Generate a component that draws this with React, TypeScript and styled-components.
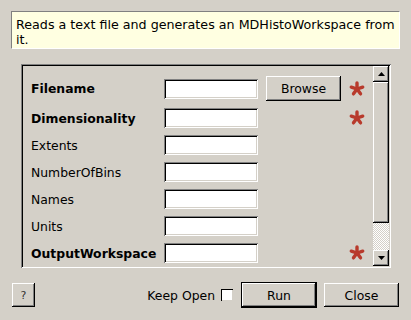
import { FC } from "react";
import styled, { createGlobalStyle, css } from "styled-components";

const GlobalStyle = createGlobalStyle`
  html, body {
    margin: 0;
    padding: 0;
    background-color: #d4d0c8;
  }

  * {
    box-sizing: border-box;
  }
`;

const raised = css`
  background-color: #d4d0c8;
  border: none;
  box-shadow: inset -1px -1px #000, inset 1px 1px #fff, inset -2px -2px #808080,
    inset 2px 2px #d4d0c8;
`;

const sunken = css`
  box-shadow: inset 1px 1px #808080, inset -1px -1px #fff, inset 2px 2px #000,
    inset -2px -2px #d4d0c8;
`;

const Dialog = styled.div`
  width: 411px;
  height: 320px;
  padding: 11px;
  display: flex;
  flex-direction: column;
  background-color: #d4d0c8;
  font-family: "DejaVu Sans", "Liberation Sans", sans-serif;
  font-size: 12.4px;
  color: #000;
`;

const Description = styled.p`
  margin: 0;
  height: 38px;
  padding: 5px 1px 0 4px;
  font-size: 12.7px;
  line-height: 15px;
  background-color: #ffffe1;
  border-top: 1px solid #808080;
  border-left: 1px solid #808080;
  border-bottom: 1px solid #fff;
  border-right: 1px solid #fff;
`;

const Panel = styled.div`
  margin: 15px 9px 0 10px;
  height: 204px;
  padding: 2px;
  display: flex;
  ${sunken};
`;

const Content = styled.div`
  flex: 1;
  padding: 10px 0 0 8px;
  display: flex;
  flex-direction: column;
  gap: 7px;
  overflow: hidden;
`;

const Row = styled.div`
  display: grid;
  grid-template-columns: 125px 94px 75px 16px;
  column-gap: 8px;
  align-items: center;
`;

const Label = styled.span<{ $required?: boolean }>`
  font-weight: ${(props) => (props.$required ? "bold" : "normal")};
  white-space: nowrap;
`;

const TextBox = styled.input`
  width: 94px;
  height: 20px;
  padding: 2px 4px;
  border: none;
  background-color: #fff;
  font: inherit;
  ${sunken};
`;

const Button = styled.button<{ $width: number; $height: number }>`
  width: ${(props) => props.$width}px;
  height: ${(props) => props.$height}px;
  padding: 0;
  font-family: inherit;
  font-size: 12.4px;
  color: #000;
  ${raised};
`;

const DefaultButton = styled(Button)`
  box-shadow: inset 0 0 0 1px #000, inset -2px -2px #000, inset 2px 2px #fff,
    inset -3px -3px #808080;
`;

const HelpButton = styled(Button)`
  font-size: 11px;
  color: #333;
`;

const ScrollBar = styled.div`
  width: 16px;
  display: flex;
  flex-direction: column;
`;

const ArrowButton = styled.div`
  height: 16px;
  display: flex;
  align-items: center;
  justify-content: center;
  ${raised};
`;

const Thumb = styled.div`
  height: 141px;
  ${raised};
`;

const Trough = styled.div`
  flex: 1;
  background: repeating-conic-gradient(#fff 0 25%, #d4d0c8 0 50%) 0 0 / 2px 2px;
`;

const Footer = styled.footer`
  margin-top: 14px;
  padding: 0 1px;
  display: flex;
  align-items: center;
`;

const Spacer = styled.div`
  flex: 1;
`;

const KeepOpen = styled.label`
  display: flex;
  align-items: center;
  gap: 6px;
  margin-right: 8px;
`;

const CheckBox = styled.span`
  width: 12px;
  height: 12px;
  background-color: #fff;
  box-shadow: inset 1px 1px #000, inset -1px -1px #d4d0c8;
`;

const CloseButton = styled(Button)`
  margin-left: 7px;
`;

const Arrow: FC<{ down?: boolean }> = ({ down }) => (
  <svg width="7" height="4" viewBox="0 0 7 4">
    <path d={down ? "M0 0h7L3.5 4z" : "M0 4h7L3.5 0z"} fill="#000" />
  </svg>
);

const Star: FC = () => (
  <svg width="16" height="16" viewBox="-8 -8 16 16">
    {[0, 72, 144, 216, 288].map((angle) => (
      <line
        key={angle}
        x1="0"
        y1="0"
        x2="0"
        y2="-6"
        stroke="#b83a2c"
        strokeWidth="3.4"
        strokeLinecap="round"
        transform={`rotate(${angle})`}
      />
    ))}
  </svg>
);

interface IProperty {
  name: string;
  required?: boolean;
  browse?: boolean;
}

const properties: IProperty[] = [
  { name: "Filename", required: true, browse: true },
  { name: "Dimensionality", required: true },
  { name: "Extents" },
  { name: "NumberOfBins" },
  { name: "Names" },
  { name: "Units" },
  { name: "OutputWorkspace", required: true },
];

const App: FC = () => {
  return (
    <>
      <GlobalStyle />
      <Dialog>
        <Description>
          Reads a text file and generates an MDHistoWorkspace from it.
        </Description>

        <Panel>
          <Content>
            {properties.map((prop) => (
              <Row key={prop.name}>
                <Label $required={prop.required}>{prop.name}</Label>
                <TextBox />
                {prop.browse ? (
                  <Button $width={75} $height={25}>
                    Browse
                  </Button>
                ) : (
                  <span />
                )}
                {prop.required ? <Star /> : <span />}
              </Row>
            ))}
          </Content>
          <ScrollBar>
            <ArrowButton>
              <Arrow />
            </ArrowButton>
            <Thumb />
            <Trough />
            <ArrowButton>
              <Arrow down />
            </ArrowButton>
          </ScrollBar>
        </Panel>

        <Footer>
          <HelpButton $width={23} $height={24}>
            ?
          </HelpButton>
          <Spacer />
          <KeepOpen>
            Keep Open
            <CheckBox />
          </KeepOpen>
          <DefaultButton $width={76} $height={26}>
            Run
          </DefaultButton>
          <CloseButton $width={75} $height={24}>
            Close
          </CloseButton>
        </Footer>
      </Dialog>
    </>
  );
};

export default App;
